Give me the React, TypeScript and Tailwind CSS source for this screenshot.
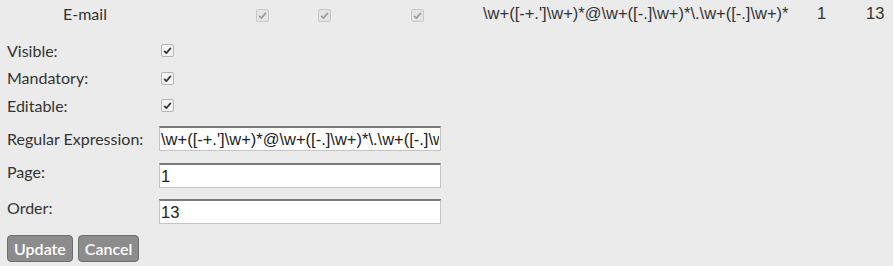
import React from "react";

const regex = "\\w+([-+.']\\w+)*@\\w+([-.]\\w+)*\\.\\w+([-.]\\w+)*";

function Check({ disabled = false }: { disabled?: boolean }) {
  return (
    <span
      className={
        "inline-flex h-[13px] w-[13px] items-center justify-center rounded-[2px] border " +
        (disabled ? "border-[#c8c8c8] bg-[#e4e4e4]" : "border-[#b5b5b5] bg-[#f3f3f3]")
      }
    >
      <svg viewBox="0 0 12 12" className="h-[9px] w-[9px]">
        <path
          d="M1.5 6.5 L4.5 9.5 L10.5 2.5"
          fill="none"
          stroke={disabled ? "#9e9e9e" : "#333"}
          strokeWidth="2.2"
          strokeLinejoin="round"
        />
      </svg>
    </span>
  );
}

function Field({ value }: { value: string }) {
  return (
    <input
      readOnly
      value={value}
      className="h-[25px] w-[282px] shrink-0 border border-[#c4c4c4] border-t-2 border-t-[#7a7a7a] bg-white px-[1px] font-['Liberation_Sans',sans-serif] text-[16.5px] text-[#222] outline-none"
    />
  );
}

export default function App() {
  return (
    <div className="h-[266px] w-[893px] bg-[#ebebeb] font-['Lato',sans-serif] text-[16px] text-[#333]">
      <div className="flex h-[27px] items-center whitespace-nowrap">
        <span className="ml-[63px] w-[193px] shrink-0">E-mail</span>
        <span className="w-[62px] shrink-0"><Check disabled /></span>
        <span className="w-[93px] shrink-0"><Check disabled /></span>
        <span className="w-[72px] shrink-0"><Check disabled /></span>
        <span className="w-[334px] shrink-0 font-['Liberation_Sans',sans-serif] text-[16.5px]">{regex}</span>
        <span className="w-[49px] shrink-0 font-['Liberation_Sans',sans-serif] text-[16.5px]">1</span>
        <span className="shrink-0 font-['Liberation_Sans',sans-serif] text-[16.5px]">13</span>
      </div>
      <div className="pl-[7px]">
        <div className="mt-[10px] flex h-[27px] items-center">
          <span className="w-[154px]">Visible:</span>
          <Check />
        </div>
        <div className="flex h-[28px] items-center">
          <span className="w-[154px]">Mandatory:</span>
          <Check />
        </div>
        <div className="flex h-[27px] items-center">
          <span className="w-[154px]">Editable:</span>
          <Check />
        </div>
        <div className="mt-[7px] flex h-[25px] items-center">
          <span className="w-[152px] shrink-0">Regular Expression:</span>
          <Field value={regex} />
        </div>
        <div className="mt-[12px] flex items-start">
          <span className="-mt-[3px] w-[152px] shrink-0">Page:</span>
          <Field value="1" />
        </div>
        <div className="mt-[11px] flex items-start">
          <span className="-mt-[3px] w-[152px] shrink-0">Order:</span>
          <Field value="13" />
        </div>
        <div className="mt-[11px] flex gap-[5px]">
          <button className="h-[27px] rounded-[4px] border border-[#6e6e6e] bg-[#8c8c8c] px-[6px] font-['Lato',sans-serif] text-[16px] font-semibold text-white">
            Update
          </button>
          <button className="h-[27px] rounded-[4px] border border-[#6e6e6e] bg-[#8c8c8c] px-[6px] font-['Lato',sans-serif] text-[16px] font-semibold text-white">
            Cancel
          </button>
        </div>
      </div>
    </div>
  );
}
